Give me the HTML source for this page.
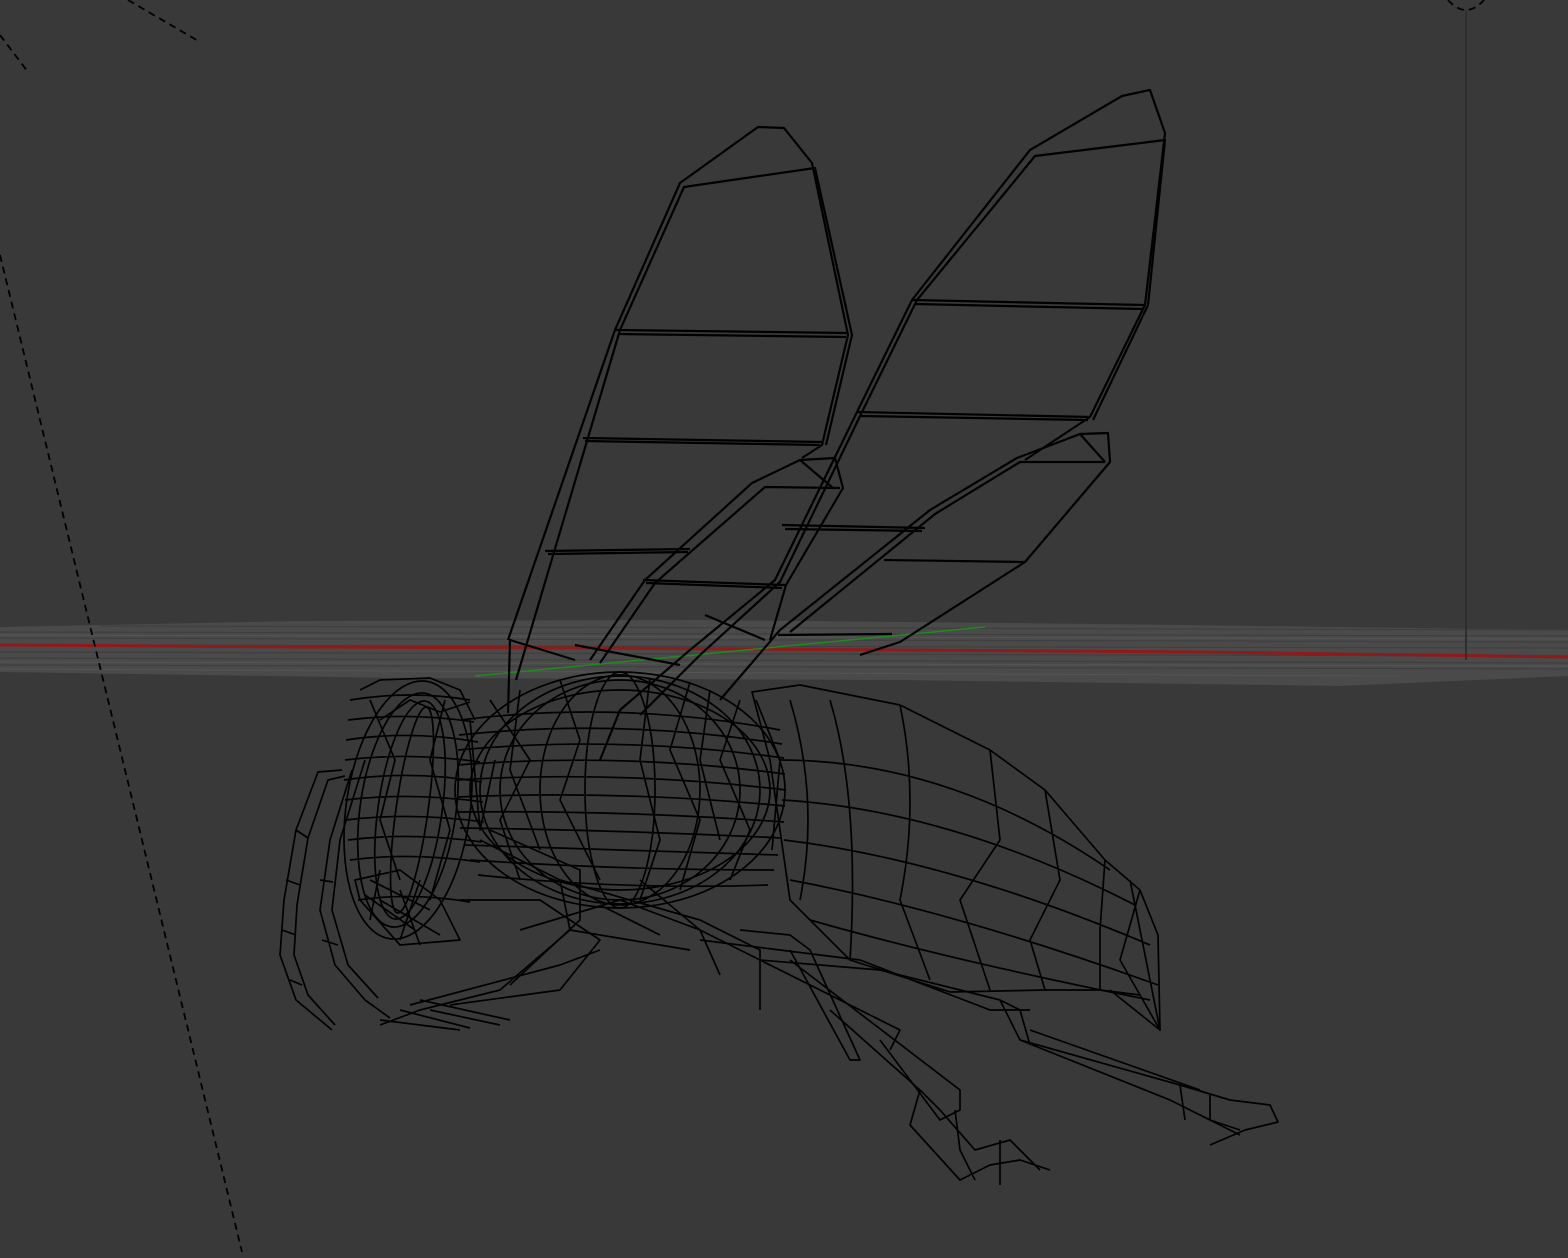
<!DOCTYPE html>
<html><head><meta charset="utf-8"><style>
html,body{margin:0;padding:0;background:#393939;width:1568px;height:1258px;overflow:hidden}
svg{display:block}
</style></head><body>
<svg width="1568" height="1258" viewBox="0 0 1568 1258" xmlns="http://www.w3.org/2000/svg">
<rect width="1568" height="1258" fill="#393939"/>
<polygon points="0,627 300,621 700,620 1100,624 1568,630 1568,676 1340,686 900,680 400,678 0,672" fill="#4a4a4a"/>
<g stroke="#3f3f3f" stroke-width="1.2">
<line x1="0" y1="632" x2="1568" y2="636"/><line x1="0" y1="638" x2="1568" y2="642"/><line x1="0" y1="652" x2="1568" y2="656"/><line x1="0" y1="658" x2="1568" y2="663"/><line x1="0" y1="665" x2="1568" y2="669"/><line x1="100" y1="626" x2="1568" y2="630"/><line x1="0" y1="645" x2="1568" y2="648"/>
</g>
<g stroke="#555" stroke-width="1">
<line x1="0" y1="635" x2="1568" y2="639"/><line x1="0" y1="662" x2="1568" y2="666"/><line x1="0" y1="669" x2="1400" y2="676"/>
</g>
<polyline points="0,645 160,646 300,647 600,648 900,650 1200,652 1568,657" fill="none" stroke="#8e1a1a" stroke-width="3"/>
<line x1="475" y1="676" x2="985" y2="627" stroke="#1f8a1f" stroke-width="1.5"/>
<line x1="1466" y1="10" x2="1466" y2="660" stroke="#2e2e2e" stroke-width="2"/>
<g stroke="#000" stroke-width="1.8" stroke-dasharray="7,5" fill="none">
<line x1="0" y1="255" x2="242" y2="1252"/>
<line x1="0" y1="35" x2="28" y2="72"/>
<line x1="128" y1="0" x2="200" y2="42"/>
<path d="M1448 0 Q1466 20 1484 0"/>
</g>
<g fill="none" stroke="#000" stroke-width="2.2" stroke-linejoin="round">
<polyline points="508,640 615,330 680,183 758,127 784,128 812,163 848,335 822,445 802,458"/>
<polyline points="516,680 620,330 684,187 815,168 852,335 826,445"/>
<line x1="616" y1="330" x2="848" y2="333"/><line x1="618" y1="334" x2="846" y2="337"/>
<line x1="583" y1="438" x2="822" y2="442"/><line x1="585" y1="441" x2="820" y2="445"/>
<line x1="545" y1="551" x2="690" y2="549"/><line x1="548" y1="554" x2="688" y2="552"/>
<polyline points="508,713 510,640 575,660"/>
<polyline points="690,650 775,580 857,412 912,300 1030,150 1122,96 1150,90 1165,133 1145,305 1090,417 1025,460"/>
<polyline points="700,655 780,582 862,412 917,300 1035,156 1165,140 1148,305 1093,420"/>
<line x1="912" y1="300" x2="1145" y2="305"/><line x1="915" y1="304" x2="1143" y2="309"/>
<line x1="857" y1="412" x2="1090" y2="417"/><line x1="860" y1="416" x2="1088" y2="420"/>
<polyline points="780,630 930,510 1017,458 1080,434 1108,433 1110,462 1025,562 900,642 860,655"/>
<polyline points="790,632 935,514 1020,462 1105,462"/>
<line x1="1080" y1="434" x2="1105" y2="462"/>
<line x1="782" y1="525" x2="925" y2="528"/><line x1="785" y1="529" x2="922" y2="531"/>
<line x1="884" y1="560" x2="1024" y2="562"/>
<line x1="778" y1="635" x2="892" y2="634"/>
<polyline points="590,660 645,580 752,483 800,460 835,458 843,488 786,585 770,640"/>
<polyline points="600,663 655,583 765,487 840,488"/>
<line x1="800" y1="460" x2="833" y2="488"/>
<line x1="643" y1="580" x2="785" y2="585"/><line x1="646" y1="583" x2="782" y2="588"/>
<line x1="705" y1="615" x2="765" y2="640"/>
<line x1="575" y1="645" x2="680" y2="665"/>
<polyline points="690,650 620,710 600,760"/><polyline points="700,655 640,715"/><polyline points="780,630 720,700"/>
</g>
<g fill="none" stroke="#000" stroke-width="1.7" stroke-linejoin="round">
<ellipse cx="408" cy="810" rx="62" ry="130" transform="rotate(8 408 810)"/>
<ellipse cx="408" cy="810" rx="48" ry="118" transform="rotate(8 408 810)"/>
<ellipse cx="410" cy="810" rx="32" ry="110" transform="rotate(8 410 810)"/>
<ellipse cx="412" cy="810" rx="16" ry="104" transform="rotate(8 412 810)"/>
<path d="M350 700 Q410 690 470 700 M346 740 Q410 730 478 742 M344 780 Q410 770 482 782 M346 820 Q410 812 484 822 M350 860 Q410 852 480 862 M358 900 Q410 892 470 902 M348 720 Q410 712 474 722 M345 760 Q410 752 480 762 M345 800 Q410 792 483 802 M348 840 Q410 832 482 842"/>
<path d="M360 690 L380 680 L430 678 L460 690 L475 720 M380 720 L410 700 L440 712 L470 702 M370 700 L395 760 L380 820 L400 880 M445 700 L430 760 L450 830 L430 900"/>
<path d="M355 880 L400 870 L440 900 L460 940 L400 945 L360 900 Z"/>
<path d="M370 880 L430 910 M380 900 L440 935 M400 890 L420 945 M365 895 L415 930 M380 870 L370 920 M420 880 L400 940"/>
<ellipse cx="620" cy="790" rx="165" ry="118"/>
<ellipse cx="620" cy="790" rx="150" ry="100"/>
<ellipse cx="620" cy="790" rx="120" ry="110"/>
<ellipse cx="620" cy="790" rx="80" ry="115"/>
<ellipse cx="620" cy="790" rx="35" ry="118"/>
<ellipse cx="620" cy="790" rx="140" ry="114"/>
<path d="M460 720 Q620 700 780 730 M458 750 Q620 735 784 758 M456 780 Q620 770 786 790 M458 812 Q620 810 784 822 M464 845 Q620 850 778 855 M478 875 Q620 890 768 885 M459 735 Q620 718 782 744 M457 765 Q620 752 785 774 M457 797 Q620 790 785 806 M460 828 Q620 830 782 838 M470 860 Q620 870 774 870"/>
<path d="M490 700 L530 760 L500 820 L520 880 M560 680 L580 740 L560 800 L600 880 M690 682 L670 750 L700 820 L680 890 M740 700 L720 760 L750 830 L730 880 M520 690 L510 770 L540 850 M650 678 L640 760 L660 840 L640 900 M710 690 L700 760 L720 840"/>
<path d="M470 720 L480 830 L495 760 M756 700 L780 760 L772 850"/>
<polygon points="752,692 800,685 900,705 990,750 1045,790 1105,860 1140,890 1158,935 1160,1030 1140,995 1100,990 1045,990 950,992 850,960 790,900 780,830 770,760"/>
<path d="M790,700 Q820,800 800,900 M830,700 Q860,800 850,960 M900,705 Q920,800 900,900 L930,980 M990,750 L1000,840 L960,900 L990,990 M1045,790 L1060,880 L1030,940 L1045,990 M1105,860 L1100,930 L1100,990 M1140,890 L1120,960 L1140,995"/>
<path d="M780,760 Q950,760 1110,870 M782,800 Q950,810 1135,905 M784,840 Q950,860 1150,945 M790,880 Q950,910 1158,985 M810,920 Q950,960 1150,1000"/>
<path d="M1110,990 L1160,1030 L1150,980 L1130,880"/>
<path d="M480 840 L560 880 L570 930 L500 990 L420 1010 L380 1025"/>
<path d="M490 830 L580 870 L580 920 L510 985"/>
<path d="M560 880 L700 920 L760 950 L760 1010 M570 930 L690 950"/>
<path d="M420 1000 L510 1020 M430 1010 L500 1025 M400 1010 L470 1028 M380 1020 L460 1030 M410 1005 L560 965 L600 950"/>
<path d="M460 900 L540 900 L600 940 L560 990 L450 1005"/>
<path d="M520 930 L620 900 L700 930 L720 975 M600 905 L660 935"/>
<path d="M640 880 L700 930 L760 960 L880 970 L1000 1000 L1020 1010 L1030 1045 M700 940 L860 960 L990 1010 L1030 1010"/>
<path d="M740 930 L790 935 L810 950 L860 1060 L850 1060 L790 950"/>
<path d="M760 960 L900 1030 L890 1050 M790 960 L960 1090 L960 1110 L940 1120 L880 1040"/>
<path d="M830 1010 L920 1090 L910 1125 L960 1180 L990 1165 L1020 1160 L1050 1170 M920 1090 L940 1110 L975 1150 L1010 1140 L1040 1170"/>
<path d="M955 1110 L960 1150 L975 1180 M1000 1140 L1000 1185"/>
<path d="M1000 1000 L1020 1040 L1180 1085 L1230 1100 L1270 1105 L1278 1122 L1245 1130 L1210 1145 M1020 1040 L1170 1100 L1210 1120 L1240 1130 M1030 1030 L1200 1090"/>
<path d="M1180 1085 L1185 1120 M1210 1095 L1210 1120 L1240 1135"/>
<path d="M342 770 L318 772 L296 830 L284 900 L280 955 L296 1000 L332 1030"/>
<path d="M345 776 L328 780 L308 838 L297 905 L294 955 L308 995 L335 1025"/>
<path d="M352 770 L330 840 L320 910 L335 965 L365 1000 L390 1018"/>
<path d="M365 760 L340 840 L332 910 L348 965 L378 998"/>
<path d="M296 830 L308 838 M286 880 L300 885 M282 930 L296 935 M290 980 L302 985 M320 880 L333 882 M322 940 L338 945"/>
</g>
</svg>
</body></html>
